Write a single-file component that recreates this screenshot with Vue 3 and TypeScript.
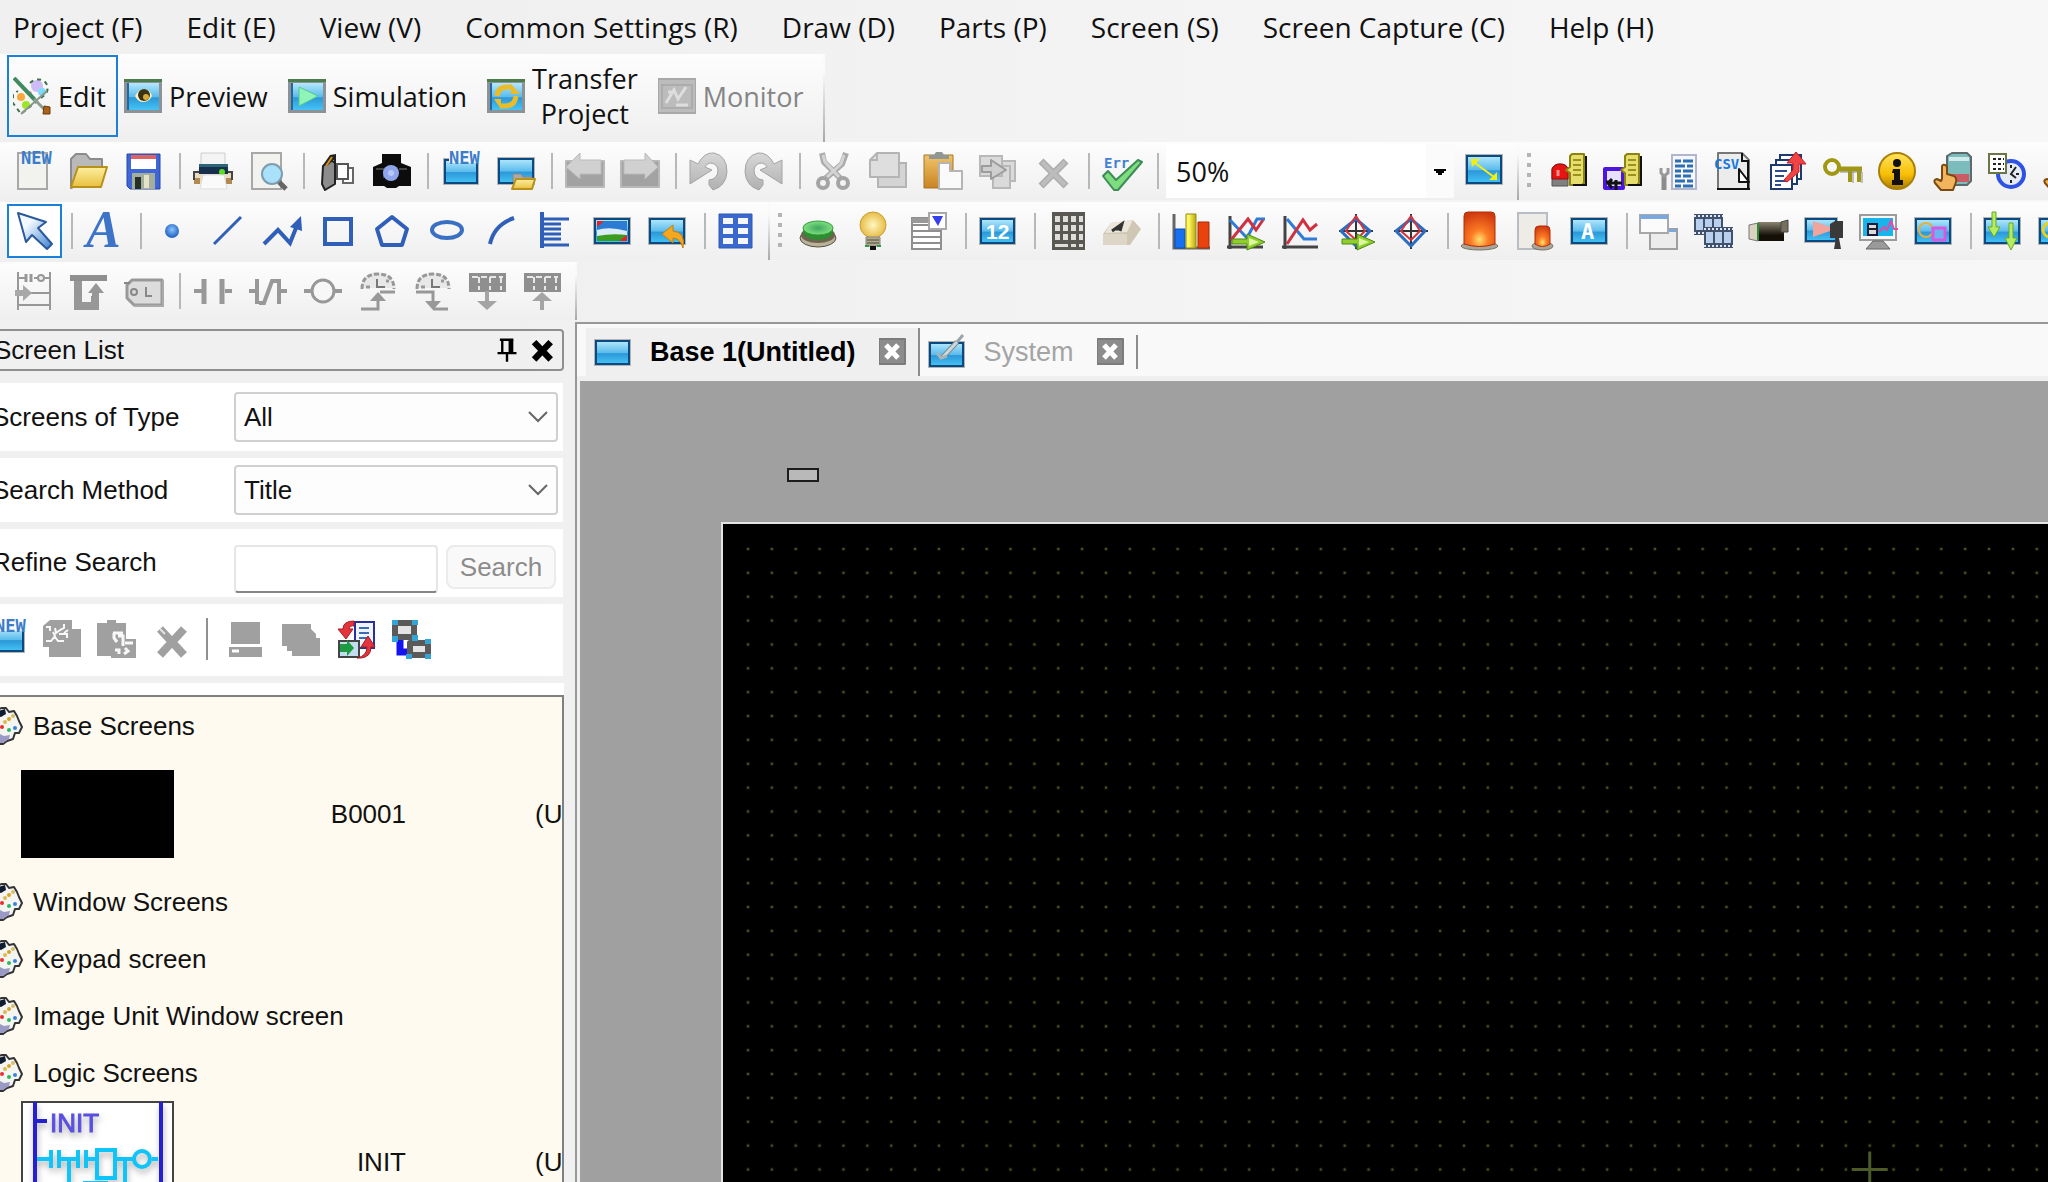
<script setup lang="ts">
import { ref } from 'vue'

interface Tool {
  icon: string
  label: string
  off?: boolean
  active?: boolean
}
type Group = Tool[]

const blue = '#2f5fb8'
const grey = '#989898'

/* Small builders for shapes that many toolbar glyphs share. */
const screen = (x: number, y: number, w: number, h: number): string =>
  `<rect x="${x}" y="${y}" width="${w}" height="${h}" fill="#b4b4b4"/>` +
  `<rect x="${x + 2}" y="${y + 2}" width="${w - 4}" height="${h - 4}" fill="url(#gScreen)" stroke="#0b4a80" stroke-width="2"/>`
const page = (x: number, y: number, w: number, h: number, fill = '#f2f2ee', stroke = '#a8a8a8'): string =>
  `<rect x="${x + 1}" y="${y + 1}" width="${w - 2}" height="${h - 2}" fill="${fill}" stroke="${stroke}" stroke-width="2"/>`
const line = (d: string, stroke: string, w = 2): string =>
  `<path d="${d}" fill="none" stroke="${stroke}" stroke-width="${w}"/>`
const shape = (d: string, fill: string, stroke = 'none', w = 1): string =>
  `<path d="${d}" fill="${fill}" stroke="${stroke}" stroke-width="${w}" stroke-linejoin="round"/>`
const word = (x: number, y: number, size: number, fill: string, text: string, family = 'DejaVu Sans Mono'): string =>
  `<text x="${x}" y="${y}" font-family="${family}, monospace" font-weight="700" font-size="${size}" fill="${fill}">${text}</text>`
const lamp = (x: number, y: number, w: number, h: number): string =>
  `<ellipse cx="${x + w / 2}" cy="${y + h - 4}" rx="${w / 2}" ry="4" fill="#a9a598" stroke="#77736a"/>` +
  `<path d="M${x + 3} ${y + h - 6}V${y + 4}Q${x + 3} ${y} ${x + 7} ${y}H${x + w - 7}Q${x + w - 3} ${y} ${x + w - 3} ${y + 4}V${y + h - 6}Q${x + w / 2} ${y + h - 1} ${x + 3} ${y + h - 6}Z" fill="url(#gLamp)" stroke="#b02c08"/>`
const recipe = shape('M21 4L23 2H35V31L33 33H21V21L17 18L21 15Z', '#e6de6c', '#8d8410', 2) +
  line('M37 4V33H24', '#111', 2) + line('M24 8H32M24 13H32M24 18H32M24 23H32', '#9b921e', 2)
const hand = shape('M8 27V15Q8 12 11 13Q13 13 13 16V22L20 24Q23 26 22 30L19 38H7L1 31Q-1 28 3 27L7 29Z', '#f2b45c', '#7a4a10', 2)
const greenArrow = shape('M5 27H20V22L38 30L20 38V32H5Z', '#8fce2c', '#4d8a12', 1) + shape('M22 26L32 30L22 34Z', '#dcf7a0')
const timer = shape('M3 16Q5 1 20 1Q35 1 36 16Z', '#e8e8e8') +
  `<path d="M4 17Q4 2 20 2Q36 2 36 17" fill="none" stroke="${grey}" stroke-width="3" stroke-dasharray="5 2"/>` +
  line('M19 7V15H27', '#777', 2) + line('M8 15H12M28 9H31', grey, 3)
const block = shape('M1 1H38V20H1Z', '#8f8f8f') +
  '<path d="M4 5H35M11 5V18M22 5V18M33 5V18" fill="none" stroke="#e8e8e8" stroke-width="2" stroke-dasharray="6 3"/>'
const gear = shape('M4 5L12 2L17 1L21 1L24 5L29 4L32 9L34 14L37 20L34 26L30 26L28 32L22 34L18 37H12L9 28L4 24L2 14Z', '#f4f4f0', '#333', 2) +
  shape('M13 26L19 29L25 28L24 32L18 36H13Z', '#9a9ac4') + shape('M13 4L20 2L21 7L16 10L13 9Z', '#101c30') +
  '<circle cx="24" cy="12" r="2" fill="#d8a52a"/><circle cx="28" cy="9" r="2" fill="#d8c070"/><circle cx="17" cy="20" r="2" fill="#e83030"/>' +
  '<circle cx="24" cy="23" r="2" fill="#2cb860"/><circle cx="30" cy="21" r="2" fill="#3884dc"/><circle cx="20" cy="15" r="2" fill="#e0b850"/>'
const curl = shape('M1 8L9 12Q15 0 25 1Q38 4 38 20Q37 34 24 38L20 33V28Q29 27 29 18Q28 11 21 11Q17 12 16 15L23 18L1 32Z', 'url(#gGrey)', '#a4a4a4', 1)
const radar = line('M19 2V37M2 19H36', '#333', 2) + shape('M19 7L33 19L19 34L4 19Z', 'none', '#2a6cc0', 3) +
  shape('M19 4L28 19L19 28L9 19Z', 'none', '#d8333a', 2)
const plot = line('M3 4V37M0 35H36', '#444', 3)
const modeScreen = '<rect x="0" y="2" width="38" height="34" fill="#8c9296"/><rect x="3" y="6" width="32" height="27" fill="url(#gScreen)"/>' +
  line('M4 6V33', '#2468a0', 2) + shape('M0 2H38V5H0Z', '#4c7c4c')

const icons: Record<string, string> = {
  fresh: page(3, 0, 31, 38) + word(7, 12, 17, '#3b7ccb', 'NEW'),
  open: shape('M2 36V7L7 2H17L21 7H33V20Z', '#b9b9b9', '#8b8b8b', 2) + shape('M9 15H38L32 35H2Z', 'url(#gFolder)', '#b8901c', 2),
  save: shape('M3 2H36V37H6L3 34Z', '#3f66d6', '#2b46a0', 1) + shape('M7 3H32V17H7Z', '#fff') + shape('M7 3H32V7H7Z', '#dd6464') +
    shape('M8 21H31V37H8Z', '#a4ae9c') + shape('M11 25H17V37H11Z', '#243026') + shape('M20 23H25V36H20Z', '#e4e2c8'),
  print: shape('M1 21L6 17H34L39 21V31H1Z', '#e9dcc0') + shape('M1 26H7V32H1ZM33 26H39V32H33Z', '#b08a50') + shape('M8 1H32V13H8Z', '#f4f4f4', '#ccc') +
    shape('M6 12H35V22H6Z', '#17304e') + shape('M6 12H35V15H6Z', '#2e6478') + '<circle cx="29" cy="20" r="3" fill="#58e020"/>' +
    line('M1 28V20H6M39 28V20H35', '#444') + shape('M10 23H31L34 37H7Z', '#fafafa', '#ddd'),
  find: page(3, 0, 31, 38) + '<circle cx="24" cy="22" r="10" fill="#a9e0fa" stroke="#7d9cae" stroke-width="2"/>' + line('M31 30L38 37', '#666', 5),
  book: shape('M6 14L12 9L14 8L18 11V32L8 38L5 32Z', '#8c8c8c', '#222', 2) + shape('M6 13L13 3L19 2L19 6L10 14Z', '#222') + line('M9 14L15 5', '#d89018', 2) +
    line('M18 6V12', '#222', 2) + page(25, 15, 12, 17, '#fff', '#666') + page(19, 11, 13, 17, '#fff', '#555'),
  camera: shape('M10 2H29V11L39 15V34H27L24 36H15L12 34H1V15L10 11Z', '#0c0c0c') + line('M4 17H12V26M35 17H27', '#444', 2) +
    '<circle cx="19" cy="21" r="8" fill="#8fa6ec"/><circle cx="19" cy="21" r="3" fill="#b8c8f8"/>',
  freshScreen: screen(2, 6, 36, 27) + '<path d="M8 0H39V11H8Z" fill="#fafafa"/>' + word(8, 12, 17, '#3b7ccb', 'NEW'),
  openScreen: screen(1, 5, 38, 28) + shape('M17 30V22H25L27 25H36V30Z', '#aaa', '#888') + shape('M20 27H39L36 37H16Z', 'url(#gFolder)', '#b8901c', 2),
  prev: shape('M1 9H39V35H1Z', '#a2a2a2', '#b8b8b8', 2) + shape('M1 15L15 1V8H36V22H15V27Z', '#d0d0d0', '#bababa'),
  next: shape('M1 9H39V35H1Z', '#a2a2a2', '#b8b8b8', 2) + shape('M38 15L25 1V8H4V22H25V27Z', '#d0d0d0', '#bababa'),
  undo: curl,
  redo: `<g transform="matrix(-1 0 0 1 39 0)">${curl}</g>`,
  cut: line('M9 1L11 10L27 26M33 1L29 12L13 26', '#ababab', 6) + line('M10 3L12 10L26 25M31 3L28 12L14 25', '#d4d4d4', 3) +
    '<circle cx="10" cy="31" r="5" fill="none" stroke="#a4a4a4" stroke-width="4"/><circle cx="30" cy="31" r="5" fill="none" stroke="#a4a4a4" stroke-width="4"/>',
  copy: page(9, 10, 30, 26, '#d4d4d4', '#b4b4b4') + shape('M2 8L9 1H31V25H2Z', '#dedede', '#b4b4b4', 2) + line('M9 2V8H3', '#b4b4b4'),
  paste: shape('M1 3H30V36H1Z', 'url(#gWood)', '#a87422') + shape('M6 3H11L13 0H19L21 3H26V7H6Z', '#8f9894') + shape('M16 11H27V19H39V37H16Z', '#fafafa', '#b4b4b4', 2),
  duplicate: page(18, 8, 20, 22, '#dadada', '#b8b8b8') + page(14, 13, 19, 24, '#dadada', '#b8b8b8') + page(1, 3, 24, 22, '#dadada', '#b8b8b8') +
    shape('M4 14H13V8L28 18L13 27V20H4Z', '#cfcfcf', '#9c9c9c', 2),
  remove: line('M8 9L33 34M33 9L8 34', '#acacac', 7) + line('M9 10L32 33M32 10L9 33', '#bdbdbd', 4),
  check: word(2, 16, 14, '#3f80d4', 'Err') + shape('M1 24L6 19L14 28L36 8L40 10L16 38H12Z', '#7fdc7f', '#3d8d58', 2),
  fit: screen(0, 2, 38, 31) + line('M10 11L29 25', '#f2ee10', 2) + shape('M6 7H15L7 15ZM32 28V20L24 28Z', '#f2ee10'),
  lampBook: shape('M3 34V17Q5 12 11 12Q18 12 19 17V34Z', '#808080', '#555') + shape('M3 27V17Q5 12 11 12Q18 12 19 18V27Z', '#e81414', '#8c0c0c') + line('M9 18V24', '#ff9090', 3) + recipe,
  boxBook: shape('M1 17H19V36H1Z', '#e8e0ff', '#4a16e0', 4) + line('M2 30H8M12 28V38M4 31H18M8 27L4 31L8 36', '#111', 3) + recipe,
  wrenchList: line('M5 22V38', '#8c8c8c', 5) + line('M2 16V21L5 24L9 21V16', '#999', 3) + page(12, 2, 26, 36, '#f4f7fb', '#b2b6cc') +
    line('M16 9H22M16 14H26M16 19H22M16 24H22M16 29H26M16 34H22M24 9H34M28 14H34M24 19H34M24 24H32M28 29H34M24 34H34', '#2e6fb4', 3),
  csv: shape('M4 1H28L35 8V37H4Z', '#ececec', '#777', 2) + line('M3 37H36M28 1V9H34V36', '#111', 2) + shape('M25 17V30H35Z', '#fff', '#111', 2) + word(0, 17, 14, '#1878e0', 'CSV'),
  stackUp: page(10, 2, 23, 26, '#fff', '#1c3a6c') + page(6, 7, 23, 26, '#fff', '#1c3a6c') + page(1, 12, 23, 26, '#fff', '#1c3a6c') +
    line('M6 19H18M6 24H15M6 29H18M6 33H12', '#2c4e90', 2) + shape('M15 28L24 18V11H18L27 0L37 12H30V20L18 30Z', '#f04444', '#c81c24'),
  key: '<circle cx="8" cy="15" r="7" fill="none" stroke="#a09812" stroke-width="4"/>' + line('M14 17H38', '#a09812', 5) + line('M26 17V30M35 17V30', '#a09812', 4) + line('M16 20H38M29 20V31M38 20V31', '#8a8a8a', 1),
  info: '<circle cx="18" cy="19" r="18" fill="url(#gInfo)" stroke="#a87f08" stroke-width="2"/><circle cx="18" cy="11" r="4" fill="#111"/>' + shape('M14 17H21V28H24V33H13V28H15V21H13Z', '#111'),
  handJar: shape('M13 4L18 1H33L37 5V29L33 33H16L13 29Z', '#7cbcbc', '#5c6a6c', 2) + shape('M17 22H35V30H18Z', '#cc5c64') + shape('M15 5H35V9H15Z', '#d2eaea') + hand,
  sheetClock: '<circle cx="22" cy="22" r="13" fill="#e6eaf4" stroke="#2d52e4" stroke-width="4"/>' + line('M22 13V16M30 22H27M22 31V28M27 15L22 22L27 26', '#222', 2) +
    page(-1, 1, 19, 21, '#fff', '#6d7448') + '<path d="M4 7H15M4 12H15M4 17H15" stroke="#222" stroke-width="2" stroke-dasharray="3 2"/>',
  hand,

  pointer: shape('M2 1L30 10L22 16L36 32L31 37L16 23L10 30Z', 'url(#gPointer)', '#2a5a9c', 2),
  text: '<text x="1" y="35" font-family="Liberation Serif, serif" font-weight="700" font-style="italic" font-size="52" fill="#3d74c8">A</text>',
  dot: '<circle cx="18" cy="19" r="7" fill="url(#gDot)"/>',
  line: line('M5 32L32 5', blue, 3),
  zigzag: line('M0 32L14 18L26 31L32 16', blue, 4) + shape('M37 4L26 15L38 19Z', blue),
  rect: '<rect x="6" y="7" width="26" height="25" fill="none" stroke="#2f5fb8" stroke-width="4"/>',
  pentagon: shape('M18 5L33 17L28 33H8L3 17Z', 'none', blue, 4),
  ellipse: '<ellipse cx="18" cy="18" rx="15" ry="8" fill="none" stroke="#3a70c4" stroke-width="4"/>',
  arc: line('M6 32Q10 13 30 6', blue, 4),
  scale: line('M3 0V36', blue, 4) + line('M3 7H30M3 12H22M3 17H22M3 22H22M3 27H22M3 33H30', blue, 3),
  picture: screen(-1, 5, 38, 28) + shape('M3 9H33V21H3Z', '#2c7cd4') + shape('M3 18Q15 14 33 19V29H3Z', '#dcecf8') + shape('M3 24Q18 21 33 23V29H3Z', '#3c9c20') + shape('M3 9H10L3 15ZM33 29V23L25 29Z', '#ec2020'),
  returnScreen: screen(-1, 5, 38, 28) + shape('M13 22L24 13V19Q37 20 34 36Q31 26 24 26V31Z', '#f4a820', '#c47c0c'),
  table: shape('M1 2H34V36H1Z', '#3b68cc', '#2f5ab0') + shape('M5 6H15V12H5ZM20 6H30V12H20ZM5 16H15V22H5ZM20 16H30V22H20ZM5 26H15V32H5ZM20 26H30V32H20Z', '#f4f6fc'),
  button: '<ellipse cx="18" cy="26" rx="18" ry="9" fill="#b9b299" stroke="#585040"/><ellipse cx="18" cy="23" rx="17" ry="8" fill="#6d6450"/><path d="M3 17V21Q7 28 18 28Q29 28 33 21V17Z" fill="#2f8c30"/><ellipse cx="18" cy="16" rx="15" ry="7" fill="url(#gGreen)" stroke="#2f9c38"/>',
  bulb: '<circle cx="18" cy="13" r="13" fill="url(#gBulb)" stroke="#c8a030"/>' + shape('M11 25H25V34H11Z', '#b0aa90', '#888') + line('M12 28H24M12 31H24', '#7f7a64') + shape('M15 34H21V38H15Z', '#111') + line('M10 34H14M22 34H26', '#2c9a44', 2),
  form: page(1, 5, 31, 33, '#fff', '#8f8f8f') + shape('M2 6H18V11H2Z', '#999') + line('M2 13H31M2 19H31M2 25H31M2 31H31', '#8f8f8f') + page(18, 0, 19, 18, '#fff', '#a8a8a8') + shape('M22 4H33L28 14Z', '#3440ec'),
  number: screen(0, 5, 37, 28) + word(7, 27, 21, '#fff', '12', 'Liberation Sans'),
  keypad: shape('M4 0H37V38H4Z', '#5a5852') + '<path d="M7 4H12V10H7ZM15 4H20V10H15ZM23 4H28V10H23ZM31 4H35V10H31ZM7 13H12V19H7ZM15 13H20V19H15ZM23 13H28V19H23ZM31 13H35V19H31ZM7 22H12V28H7ZM15 22H20V28H15ZM23 22H28V28H23ZM31 22H35V28H31ZM7 32H20V35H7ZM23 32H28V35H23ZM31 32H35V35H31Z" fill="#e0deda"/>',
  keycap: shape('M0 22L8 11L30 8L38 17L27 33H0Z', '#cfc6b4') + shape('M8 11L30 8L24 20L2 21Z', '#ece6da') + shape('M0 22H24V33H0Z', '#ddd5c6') + line('M9 19L19 12L17 19M12 17H18', '#333', 3),
  bars: line('M2 2V36H38', '#666', 3) + shape('M3 17H13V36H3Z', '#1670f0', '#0c4cb4') + shape('M14 2H24V36H14Z', 'url(#gYellow)', '#8f8c10') + shape('M26 10H37V36H26Z', '#e8430e', '#a82c06'),
  trend: plot + line('M3 8L20 26L30 7H38', '#2f7cd8', 3) + line('M4 28L21 7L29 18L36 8', '#d03040', 3) + greenArrow,
  graph: plot + line('M5 7L22 27H35', '#2f7cd8', 3) + line('M5 32L21 8L28 18L35 12', '#d03040', 3),
  radarTrend: radar + greenArrow,
  radar,
  alarm: lamp(0, 0, 37, 38),
  alarmPage: page(1, 0, 31, 38, '#eeece6', '#b8bcc4') + lamp(16, 14, 21, 24),
  label: screen(-1, 5, 38, 28) + word(10, 27, 22, '#fff', 'A'),
  windows: page(9, 16, 29, 22, '#ececec', '#a0a0a0') + shape('M11 17H36V20H11Z', '#7ca8e0') + page(-1, 2, 30, 20, '#fbfbfb', '#a8a8a8') + shape('M0 3H28V7H0Z', '#7ca8e0'),
  film: [[-1, 2], [9, 15]].map(([x, y]) => `<rect x="${x}" y="${y}" width="29" height="21" fill="#43526c"/><path d="M${x} ${y + 2}h29M${x} ${y + 19}h29" stroke="#dfe8f4" stroke-width="2" stroke-dasharray="2 2"/><path d="M${x + 2} ${y + 5}h7v11h-7zM${x + 11} ${y + 5}h7v11h-7zM${x + 20} ${y + 5}h7v11h-7z" fill="#b9cfee"/>`).join(''),
  video: shape('M8 10H34V29H8Z', 'url(#gDark)') + shape('M-1 13L8 11V29L-1 27Z', '#d9d2c0', '#777') + line('M8 11V28', '#2a8a3a', 2) + shape('M31 10L38 8V20H31Z', '#77705c', '#444'),
  videoScreen: screen(-1, 5, 34, 26) + shape('M8 9V25L25 19V15Z', '#f0a49c') + shape('M25 12L30 9H38V26H34L36 37H29L31 26H25Z', '#3a3a3a'),
  monitor: page(-1, 2, 38, 27, '#f6f6f6', '#9c9c9c') + shape('M3 6H33V24H3Z', '#18b4ec') + page(7, 11, 11, 13, '#dcdcdc', '#1b1b3c') + line('M9 17H16', '#222', 2) +
    line('M19 20L24 15L27 18L31 9L34 17H38', '#e04ca8', 2) + shape('M13 29H23L30 37H6Z', '#9a9a9a', '#666'),
  shapes: screen(-1, 5, 38, 28) + '<circle cx="11" cy="18" r="7" fill="none" stroke="#e0b040" stroke-width="2"/><rect x="18" y="16" width="12" height="12" fill="#6cb4f0" stroke="#d858e4" stroke-width="3"/>',
  download: screen(-1, 5, 38, 28) + shape('M8 0H12V15H16L10 25L4 15H8Z', '#b4ee60', '#68a828') + shape('M25 11H29V26H33L27 38L21 26H25Z', '#b4ee60', '#68a828'),
  circleScreen: screen(-1, 5, 38, 28) + '<circle cx="11" cy="18" r="7" fill="none" stroke="#e8d020" stroke-width="3"/>',

  ladder: line('M4 0V38M36 0V38M4 6H12M24 6H20M27 6H36M4 33H36M14 21H36', grey) + line('M12 2V10M17 2V10', grey, 3) + '<circle cx="27" cy="6" r="3" fill="#eee" stroke="#989898" stroke-width="2"/>' + shape('M1 18H9V13L18 21L9 29V24H1Z', '#a8a8a8'),
  rung: line('M1 6H38', '#8f8f8f', 6) + line('M9 9V34H26V24', '#979797', 8) + shape('M27 11L35 21H30V34H23V21H19Z', '#979797'),
  tag: shape('M8 8H38V33H10L3 26V13Z', '#dcdcdc', '#999', 3) + line('M10 34H39V8', '#aaa', 2) + '<circle cx="10" cy="20" r="3" fill="none" stroke="#888" stroke-width="2"/>' + line('M0 11H6M22 15V24H28', '#888', 2),
  contact: line('M1 19H9M32 19H39', grey, 4) + line('M11 7V32M29 7V32', grey, 5),
  contactNot: line('M1 19H9M32 19H39', grey, 4) + line('M9 7V32M31 7V32', grey, 4) + line('M11 31H16L24 9H29', grey, 4),
  coil: '<circle cx="20" cy="19" r="11" fill="#f7f7f7" stroke="#989898" stroke-width="3"/>' + line('M1 19H9M31 19H39', grey, 4),
  timerUp: timer + line('M3 37H20V26', grey, 3) + line('M22 20H37', grey, 3) + shape('M20 20L28 29H12Z', grey),
  timerDown: timer + line('M3 20H20V30M20 37H35', grey, 3) + shape('M20 38L28 29H12Z', grey),
  blockDown: block + line('M19 19V32', '#a4a4a4', 4) + shape('M19 38L29 29H9Z', '#a4a4a4'),
  blockUp: block + line('M19 38V25', '#a4a4a4', 4) + shape('M19 20L29 29H9Z', '#a4a4a4'),

  modeEdit: '<circle cx="24" cy="9" r="6" fill="#cdbcf6"/><circle cx="29" cy="15" r="4" fill="#7fdcf8"/><circle cx="8" cy="20" r="4" fill="#f8a838"/><circle cx="13" cy="28" r="4" fill="#9ce628"/><circle cx="17" cy="16" r="2" fill="#f4a0c8"/>' +
    '<path d="M17 6Q24 0 31 4Q37 9 33 17L8 37L0 26V17L5 14" fill="none" stroke="#3c7048" stroke-width="2" stroke-dasharray="4 4"/>' +
    line('M34 14L8 37', '#8a968c', 2) + line('M1 1L22 23', '#3f8a5e', 4) + line('M21 22L33 34', '#8c9c90', 3) + shape('M31 29L37 30V37H30Z', '#a8641c', '#6c3c0c'),
  modePreview: modeScreen + '<path d="M11 19Q15 12 20 12Q26 12 28 19Q25 25 19 25Q14 25 11 19Z" fill="#fff0c0"/><circle cx="20" cy="18" r="6" fill="#3a3214"/><circle cx="22" cy="20" r="3" fill="#d8ac38"/>',
  modeRun: modeScreen + shape('M11 10V29L30 19Z', '#8ef4b8', '#58c890'),
  modeTransfer: modeScreen + line('M10 19Q11 10 20 10H25', '#ecbc28', 5) + line('M29 19Q28 29 18 29H13', '#ecbc28', 5) + shape('M24 7V17H33ZM14 32V22H7Z', '#ecbc28'),
  modeMonitor: shape('M0 2H38V36H0Z', '#bcbcbc', '#a8a8a8', 2) + line('M4 8H34V31H4Z', '#acacac', 2) + line('M8 26L16 13L20 22L28 10M10 15H15M18 28H30', '#dedede', 3),
  base: screen(0, 6, 37, 27),
  system: screen(0, 8, 37, 27) + line('M14 25L29 9', '#7a8a90', 5) + line('M14 25L29 9', '#d0d8da', 3) + line('M9 20L13 25L19 23', '#a8b4b8', 3) + line('M29 9L35 2', '#9aa6aa', 3),
  close: shape('M0 6H26V31H0Z', '#8c8c8c', '#7c7c7c', 2) + line('M7 12L19 25M19 12L7 25', '#fff', 5),

  listCopy: shape('M1 6L8 0H30V9H39V37H7V27H1Z', '#a0a0a0') + line('M4 7H8V11M13 8L14 13L18 10L22 8V4M22 13L26 10M4 21H9L13 16L11 12M13 17L16 21H22M17 14H25V18', '#f8f8f8', 2),
  listPaste: shape('M0 3H10V0H19V3H29V19H39V38H14V36H0Z', '#a0a0a0') + line('M16 13H26M17 13V18L20 22M21 16H26V26M18 30H22V34M28 23H36M28 28L31 31L27 34', '#f8f8f8', 3),
  listRemove: line('M8 9L32 35M32 9L8 35', '#a0a0a0', 8) + line('M8 9L13 14', '#e4e4e4', 2),
  listScreen: shape('M4 2H33V24H4ZM2 27H35V37H2Z', '#a0a0a0') + line('M5 31H12', '#fff', 3),
  listStack: shape('M0 4H29V9L34 14V18H38V36H10V31H5V26H0Z', '#a0a0a0'),
  listExchange: page(17, 1, 21, 28, '#f0f4fc', '#28309c') + line('M22 8H32M22 13H32M22 18H32', '#3c6cb8', 2) + page(1, 20, 22, 18, '#c4dcf0', '#444') + shape('M3 24H10V20L17 28L10 36V32H3Z', '#1e9a40') +
    shape('M17 1Q6 1 6 9H1L9 19L16 9H12Q13 5 17 6ZM20 38Q30 36 30 27H24L31 16L38 27H34Q34 37 24 38Z', '#e4343c', '#a41c24'),
  listLink: line('M8 16V32H17', '#1414f0', 7) + shape('M3 3H22V17H3ZM18 23H36V35H18Z', '#e4e4e4', '#5a5a5a', 6) +
    shape('M0 0H6V5H0ZM20 0H26V5H20ZM0 16H6V22H0ZM20 15H26V21H20ZM33 19H39V24H33ZM33 34H39V39H33ZM14 34H20V39H14Z', '#34a4d8'),
  gear,
  pin: line('M10 6H27M13 6V23M7 23H31M19 23V34', '#000', 3) + line('M24 6V23', '#000', 6),
  shut: line('M9 9L30 31M30 9L9 31', '#000', 8)
}

const t = (icon: string, label: string, off = false, active = false): Tool => ({ icon, label, off, active })

const menus = ['Project (F)', 'Edit (E)', 'View (V)', 'Common Settings (R)', 'Draw (D)', 'Parts (P)', 'Screen (S)', 'Screen Capture (C)', 'Help (H)']

const modes: Tool[] = [
  t('modeEdit', 'Edit', false, true), t('modePreview', 'Preview'), t('modeRun', 'Simulation'),
  t('modeTransfer', 'Transfer\nProject'), t('modeMonitor', 'Monitor', true)
]

const standard: Group[] = [
  [t('fresh', 'New project'), t('open', 'Open project'), t('save', 'Save project')],
  [t('print', 'Print'), t('find', 'Print preview')],
  [t('book', 'Cross reference'), t('camera', 'Capture')],
  [t('freshScreen', 'New screen'), t('openScreen', 'Open screen')],
  [t('prev', 'Previous screen', true), t('next', 'Next screen', true)],
  [t('undo', 'Undo', true), t('redo', 'Redo', true)],
  [t('cut', 'Cut', true), t('copy', 'Copy', true), t('paste', 'Paste'), t('duplicate', 'Duplicate', true), t('remove', 'Delete', true)],
  [t('check', 'Error check')]
]
const settings: Tool[] = [
  t('lampBook', 'Alarm'), t('boxBook', 'Recipe'), t('wrenchList', 'Sampling'), t('csv', 'CSV data'), t('stackUp', 'Transfer data'),
  t('key', 'Security'), t('info', 'Operation log'), t('handJar', 'Data store'), t('sheetClock', 'Time schedule'), t('hand', 'Touch action')
]
const drawing: Group[] = [
  [t('pointer', 'Select', false, true)],
  [t('text', 'Text')],
  [t('dot', 'Dot'), t('line', 'Line'), t('zigzag', 'Polyline'), t('rect', 'Rectangle'), t('pentagon', 'Polygon'), t('ellipse', 'Ellipse'),
    t('arc', 'Arc'), t('scale', 'Scale'), t('picture', 'Image'), t('returnScreen', 'Call screen')],
  [t('table', 'Table')]
]
const parts: Group[] = [
  [t('button', 'Switch'), t('bulb', 'Lamp'), t('form', 'Selector list')],
  [t('number', 'Data display')],
  [t('keypad', 'Keypad'), t('keycap', 'Key')],
  [t('bars', 'Bar graph'), t('trend', 'Historical trend'), t('graph', 'Line graph'), t('radarTrend', 'XY trend'), t('radar', 'XY graph')],
  [t('alarm', 'Alarm part'), t('alarmPage', 'Alarm list'), t('label', 'Message display')],
  [t('windows', 'Window'), t('film', 'Movie'), t('video', 'Video'), t('videoScreen', 'Video module'), t('monitor', 'Remote display'), t('shapes', 'Picture display')],
  [t('download', 'Data transmission'), t('circleScreen', 'Special data')]
]
const logic: Group[] = [
  [t('ladder', 'Insert rung', true), t('rung', 'Insert branch', true), t('tag', 'Insert label', true)],
  [t('contact', 'Normally open', true), t('contactNot', 'Normally closed', true), t('coil', 'Coil', true), t('timerUp', 'On timer', true),
    t('timerDown', 'Off timer', true), t('blockDown', 'Count down', true), t('blockUp', 'Count up', true)]
]
const listTools: Group[] = [
  [t('freshScreen', 'New screen'), t('listCopy', 'Copy screen', true), t('listPaste', 'Paste screen', true), t('listRemove', 'Delete screen', true)],
  [t('listScreen', 'Change attributes', true), t('listStack', 'Overlap', true), t('listExchange', 'Exchange'), t('listLink', 'Screen links')]
]

const zoom = ref('50%')
const screenType = ref('All')
const method = ref('Title')
const query = ref('')

/* The edit grid: one dot for every 20 panel units, with a mark at the panel's centre. */
const grid = { pitch: 358 / 15, first: 25, centreX: 47, centreY: 26 }
const cx = grid.first + grid.centreX * grid.pitch
const cy = grid.first + grid.centreY * grid.pitch
</script>

<template>
  <div class="app">
    <svg class="defs" aria-hidden="true">
      <defs>
        <linearGradient id="gScreen" x1="0" y1="0" x2="0" y2="1"><stop offset="0" stop-color="#b4e8fc" /><stop offset=".5" stop-color="#5cbcec" /><stop offset=".55" stop-color="#2c98d8" /><stop offset="1" stop-color="#45c4f6" /></linearGradient>
        <linearGradient id="gFolder" x1="0" y1="0" x2="0" y2="1"><stop offset="0" stop-color="#fdf0a0" /><stop offset="1" stop-color="#e8c040" /></linearGradient>
        <linearGradient id="gGrey" x1="0" y1="0" x2="0" y2="1"><stop offset="0" stop-color="#d8d8d8" /><stop offset="1" stop-color="#b0b0b0" /></linearGradient>
        <linearGradient id="gWood" x1="0" y1="0" x2="0" y2="1"><stop offset="0" stop-color="#f0c468" /><stop offset="1" stop-color="#c88424" /></linearGradient>
        <linearGradient id="gInfo" x1="0" y1="0" x2="0" y2="1"><stop offset="0" stop-color="#ffe45c" /><stop offset=".6" stop-color="#f8be04" /><stop offset="1" stop-color="#a87a04" /></linearGradient>
        <linearGradient id="gPointer" x1="0" y1="0" x2="1" y2="1"><stop offset=".3" stop-color="#f2f9ff" /><stop offset="1" stop-color="#3c80d0" /></linearGradient>
        <linearGradient id="gDark" x1="0" y1="0" x2="0" y2="1"><stop offset="0" stop-color="#8a8470" /><stop offset=".7" stop-color="#141008" /></linearGradient>
        <linearGradient id="gYellow" x1="0" y1="0" x2="1" y2="0"><stop offset=".3" stop-color="#fff660" /><stop offset="1" stop-color="#b8a810" /></linearGradient>
        <radialGradient id="gDot" cx=".5" cy=".4"><stop offset="0" stop-color="#8cc4fc" /><stop offset="1" stop-color="#2c6cc8" /></radialGradient>
        <radialGradient id="gLamp" cx=".5" cy=".8" r=".8"><stop offset="0" stop-color="#ffe070" /><stop offset=".35" stop-color="#fc7c24" /><stop offset="1" stop-color="#d03a10" /></radialGradient>
        <radialGradient id="gGreen"><stop offset="0" stop-color="#3fa860" /><stop offset="1" stop-color="#80e080" /></radialGradient>
        <radialGradient id="gBulb"><stop offset="0" stop-color="#fff8c0" /><stop offset="1" stop-color="#e8bc48" /></radialGradient>
      </defs>
    </svg>

    <nav class="menu" aria-label="Main menu">
      <button v-for="m in menus" :key="m" type="button">{{ m }}</button>
    </nav>

    <div class="modes band">
      <button v-for="m in modes" :key="m.label" type="button" class="mode" :class="{ active: m.active }" :disabled="m.off">
        <svg viewBox="0 0 38 38" v-html="icons[m.icon]" /><span>{{ m.label }}</span>
      </button>
    </div>

    <div class="line">
      <div class="band bar">
        <div v-for="(g, i) in standard" :key="i" class="group">
          <button v-for="b in g" :key="b.label" type="button" class="tool" :aria-label="b.label" :disabled="b.off"><svg viewBox="0 0 38 38" v-html="icons[b.icon]" /></button>
        </div>
        <div class="group">
          <select v-model="zoom" class="zoom" aria-label="Zoom"><option>25%</option><option>50%</option><option>100%</option></select>
          <button type="button" class="tool" aria-label="Fit to window"><svg viewBox="0 0 38 38" v-html="icons.fit" /></button>
        </div>
      </div>
      <div class="band bar more">
        <i class="grip" />
        <button v-for="b in settings" :key="b.label" type="button" class="tool" :aria-label="b.label"><svg viewBox="0 0 38 38" v-html="icons[b.icon]" /></button>
      </div>
    </div>

    <div class="line">
      <div class="band bar drawing">
        <div v-for="(g, i) in drawing" :key="i" class="group">
          <button v-for="b in g" :key="b.label" type="button" class="tool" :class="{ active: b.active }" :aria-label="b.label"><svg viewBox="0 0 38 38" v-html="icons[b.icon]" /></button>
        </div>
      </div>
      <div class="band bar more">
        <i class="grip" />
        <div v-for="(g, i) in parts" :key="i" class="group">
          <button v-for="b in g" :key="b.label" type="button" class="tool" :aria-label="b.label"><svg viewBox="0 0 38 38" v-html="icons[b.icon]" /></button>
        </div>
      </div>
    </div>

    <div class="line">
      <div class="band bar">
        <div v-for="(g, i) in logic" :key="i" class="group">
          <button v-for="b in g" :key="b.label" type="button" class="tool" :aria-label="b.label" :disabled="b.off"><svg viewBox="0 0 38 38" v-html="icons[b.icon]" /></button>
        </div>
      </div>
    </div>

    <div class="work">
      <aside class="dock">
        <header>
          <h2>Screen List</h2>
          <button type="button" aria-label="Auto hide"><svg viewBox="0 0 38 38" v-html="icons.pin" /></button>
          <button type="button" aria-label="Close panel"><svg viewBox="0 0 38 38" v-html="icons.shut" /></button>
        </header>
        <div class="field">
          <label for="type">Screens of Type</label>
          <div class="pick">
            <select id="type" v-model="screenType"><option>All</option><option>Base</option></select>
            <svg viewBox="0 0 20 12"><path d="M1 1L10 10L19 1" fill="none" stroke="#666" stroke-width="2" /></svg>
          </div>
        </div>
        <div class="field short">
          <label for="method">Search Method</label>
          <div class="pick">
            <select id="method" v-model="method"><option>Title</option><option>Comment</option></select>
            <svg viewBox="0 0 20 12"><path d="M1 1L10 10L19 1" fill="none" stroke="#666" stroke-width="2" /></svg>
          </div>
        </div>
        <div class="field refine">
          <label for="query">Refine Search</label>
          <input id="query" v-model="query" type="text">
          <button type="button" class="search" disabled>Search</button>
        </div>
        <div class="field actions">
          <div v-for="(g, i) in listTools" :key="i" class="group">
            <button v-for="b in g" :key="b.label" type="button" class="tool" :aria-label="b.label" :disabled="b.off"><svg viewBox="0 0 38 38" v-html="icons[b.icon]" /></button>
          </div>
        </div>
        <div class="list">
          <ul class="tree">
            <li>
              <div class="node"><svg viewBox="0 0 38 38" v-html="icons.gear" />Base Screens</div>
              <div class="item"><div class="thumb blank" /><span class="id">B0001</span><span class="title">(Untitled)</span></div>
            </li>
            <li><div class="node"><svg viewBox="0 0 38 38" v-html="icons.gear" />Window Screens</div></li>
            <li><div class="node"><svg viewBox="0 0 38 38" v-html="icons.gear" />Keypad screen</div></li>
            <li><div class="node"><svg viewBox="0 0 38 38" v-html="icons.gear" />Image Unit Window screen</div></li>
            <li>
              <div class="node"><svg viewBox="0 0 38 38" v-html="icons.gear" />Logic Screens</div>
              <div class="item tall">
                <svg class="thumb" viewBox="0 0 153 122">
                  <rect x="1" y="1" width="151" height="120" fill="#fff" stroke="#444" stroke-width="2" />
                  <g class="glow">
                    <path d="M14 1V121M140 1V121M14 20H26" fill="none" stroke="#2420d0" stroke-width="4" />
                    <text x="29" y="31" font-family="Liberation Sans, sans-serif" font-size="26" fill="#5a50e0" stroke="#5a50e0">INIT</text>
                    <path d="M16 58H29M38 58H56M65 58H75M95 58H112M131 58H137M30 49V67M38 49V67M57 49V67M65 49V67M76 49H94V77H76ZM48 58V90H64M104 58V90H85M64 82H85V100H64Z" fill="none" stroke="#10c4f8" stroke-width="4" />
                    <circle cx="121" cy="58" r="8" fill="none" stroke="#10c4f8" stroke-width="4" />
                  </g>
                </svg>
                <span class="id">INIT</span><span class="title">(Untitled)</span>
              </div>
            </li>
          </ul>
        </div>
      </aside>

      <main class="editor">
        <div class="tabs">
          <div class="tab current">
            <svg viewBox="0 0 38 38" v-html="icons.base" /><span>Base 1(Untitled)</span>
            <button type="button" aria-label="Close Base 1"><svg viewBox="0 0 28 38" v-html="icons.close" /></button>
          </div>
          <div class="tab">
            <svg viewBox="0 0 38 38" v-html="icons.system" /><span>System</span>
            <button type="button" aria-label="Close System"><svg viewBox="0 0 28 38" v-html="icons.close" /></button>
          </div>
        </div>
        <div class="stage">
          <i class="handle" />
          <svg class="panel">
            <defs>
              <pattern id="dots" :x="grid.first - 4" :y="grid.first - 4" :width="grid.pitch" :height="grid.pitch" patternUnits="userSpaceOnUse">
                <circle cx="4" cy="4" r="2" fill="#161b0b" /><circle cx="4" cy="4" r="1" fill="#5a682c" />
              </pattern>
            </defs>
            <rect width="100%" height="100%" fill="#000" />
            <rect :x="grid.first - 4" :y="grid.first - 4" width="100%" height="100%" fill="url(#dots)" />
            <path :d="`M${cx - 18} ${cy}h36M${cx} ${cy - 18}v36`" stroke="#4c5a28" stroke-width="3" />
          </svg>
        </div>
      </main>
    </div>
  </div>
</template>

<style>
body {
  background: #f0f0f0;
  overflow: hidden;
}
</style>

<style scoped>
.app {
  display: flex;
  flex-direction: column;
  height: 100vh;
  overflow: hidden;
  background: linear-gradient(90deg, #f0f0f0 25%, #f7f7f7);
  color: #111;
  font: 27px/35px "Open Sans", sans-serif;
}
.app * {
  box-sizing: border-box;
}
.defs {
  position: absolute;
  width: 0;
  height: 0;
}
button {
  padding: 0;
  border: 0;
  background: none;
  color: inherit;
  font: inherit;
}
svg {
  display: block;
  flex: none;
}

.menu {
  display: flex;
  gap: 44px;
  height: 54px;
  flex: none;
  padding-left: 13px;
  font-size: 28px;
  white-space: nowrap;
}

.band {
  background: linear-gradient(#fdfdfd, #efefef);
  border-right: 2px solid #b0b0b0;
  border-image: linear-gradient(#fafafa 20%, #a8a8a8) 0 2 0 0;
  flex: none;
}
.modes {
  display: flex;
  align-items: center;
  align-self: flex-start;
  height: 88px;
  padding: 0 10px 4px 7px;
}
.mode {
  display: flex;
  align-items: center;
  gap: 7px;
  height: 82px;
  padding: 0 8px;
  border: 2px solid transparent;
  white-space: pre-line;
  text-align: center;
}
.mode svg {
  width: 38px;
  height: 38px;
}
.mode.active {
  padding: 0 10px 0 4px;
  border-color: #1a80d8;
  margin-right: -4px;
}
.mode:disabled {
  color: #858585;
}

.line {
  display: flex;
  flex: none;
  height: 60px;
}
.bar {
  display: flex;
  align-items: center;
  height: 58px;
  padding: 0 6px 0 5px;
}
.drawing {
  padding: 0 4px 0 7px;
}
.more {
  padding-left: 0;
  flex: 1 0 auto;
}
.group {
  display: flex;
  align-items: center;
}
.group + .group::before {
  content: "";
  width: 2px;
  height: 36px;
  margin: 0 3px 0 9px;
  background: #b8b8b8;
}
.tool {
  display: flex;
  align-items: center;
  justify-content: center;
  width: 55px;
  height: 54px;
  border: 2px solid transparent;
}
.tool svg {
  width: 38px;
  height: 38px;
  overflow: visible;
}
.tool.active {
  border-color: #1a80d8;
  background: #fff;
}
.grip {
  width: 4px;
  height: 36px;
  margin: 0 9px 0 8px;
  background: repeating-linear-gradient(#b4b4b4 0 4px, transparent 4px 10px);
}
.zoom {
  appearance: none;
  width: 288px;
  height: 54px;
  margin: 0 2px 0 4px;
  padding: 0 10px;
  border: 0;
  border-radius: 0;
  background: linear-gradient(#000, #000) 268px 25px / 12px 2px no-repeat,
    linear-gradient(#000, #000) 270px 27px / 8px 2px no-repeat,
    linear-gradient(#000, #000) 272px 29px / 4px 2px no-repeat,
    linear-gradient(90deg, #fff 260px, #fbfbfb 260px);
  color: #111;
  font: inherit;
}

.work {
  display: flex;
  flex: 1;
  min-height: 0;
}
.dock {
  display: flex;
  flex-direction: column;
  gap: 7px;
  width: 572px;
  flex: none;
  margin-left: -8px;
  padding-top: 7px;
  font: 26px/34px "Liberation Sans", sans-serif;
}
.dock header {
  display: flex;
  align-items: center;
  height: 42px;
  margin-bottom: 5px;
  border: 2px solid #909090;
  border-radius: 4px;
  flex: none;
}
h2 {
  flex: 1;
  margin: 0;
  font: inherit;
}
header button {
  margin-right: 5px;
}
header svg {
  width: 30px;
  height: 30px;
}
.field {
  display: flex;
  align-items: center;
  height: 68px;
  flex: none;
  margin-right: 1px;
  padding-right: 5px;
  background: #fff;
  white-space: nowrap;
}
.short {
  height: 64px;
}
.field label {
  width: 242px;
  flex: none;
}
.pick {
  display: flex;
  align-items: center;
  flex: 1;
  height: 50px;
}
.pick select {
  appearance: none;
  width: 100%;
  height: 50px;
  padding: 0 8px;
  border: 2px solid #d0d0d0;
  border-radius: 4px;
  background: #fdfdfd;
  color: #111;
  font: inherit;
}
.pick svg {
  width: 20px;
  height: 12px;
  margin-left: -30px;
  margin-right: 10px;
  pointer-events: none;
}
.refine {
  align-items: flex-start;
  padding-top: 16px;
}
.field input {
  width: 204px;
  height: 48px;
  border: 2px solid #e6e6e6;
  border-bottom-color: #858585;
  border-radius: 4px;
  background: #fff;
  font: inherit;
}
.search {
  width: 110px;
  height: 44px;
  margin-left: 8px;
  border: 2px solid #ebebeb;
  border-radius: 8px;
  background: #f9f9f9;
  color: #8c8c8c;
}
.actions {
  height: 72px;
  padding-bottom: 2px;
}
.actions .group:first-child {
  margin-left: -14px;
}
.actions .group + .group::before {
  height: 42px;
  margin: 0 10px 0 8px;
  background: #909090;
}
.list {
  flex: 1;
  min-height: 0;
  padding-top: 12px;
  background: #fff;
}
.tree {
  height: 100%;
  margin: 0;
  padding: 0;
  overflow: hidden;
  border: 2px solid #808080;
  border-bottom: 0;
  background: #fefaef;
  list-style: none;
  white-space: nowrap;
}
.node {
  display: flex;
  align-items: center;
  gap: 10px;
  height: 57px;
}
.node svg {
  width: 38px;
  height: 38px;
  margin-left: -9px;
}
.item {
  display: flex;
  align-items: center;
  height: 119px;
  padding-left: 27px;
}
.thumb {
  width: 153px;
  height: 88px;
  flex: none;
}
.blank {
  background: #000;
}
.tall {
  height: 122px;
}
.tall .thumb {
  height: 122px;
}
.glow {
  filter: drop-shadow(1px 4px 3px rgb(0 0 0 / 30%));
}
.id {
  width: 232px;
  flex: none;
  text-align: right;
}
.title {
  flex: none;
  margin-left: 129px;
}

.editor {
  display: flex;
  flex-direction: column;
  flex: 1;
  min-width: 0;
  margin-left: 11px;
  border: solid #989898;
  border-width: 2px 0 0 2px;
  font: 27px/34px "Liberation Sans", sans-serif;
}
.tabs {
  display: flex;
  height: 57px;
  flex: none;
  padding: 4px 0 0 9px;
  border-bottom: 5px solid #efefef;
  background: #f9f9f9;
}
.tab {
  display: flex;
  align-items: center;
  height: 34px;
  margin-top: 7px;
  padding: 0 11px 0 8px;
  border-right: 2px solid #8c8c8c;
  color: #a4a4a4;
}
.tab > svg {
  width: 38px;
  height: 38px;
}
.tab button svg {
  width: 28px;
  height: 38px;
}
.tab span {
  margin: 0 23px 0 18px;
}
.current {
  height: 48px;
  margin-top: 0;
  background: #efefef;
  color: #000;
  font-weight: 700;
}
.stage {
  display: flex;
  flex: 1;
  min-height: 0;
  margin-left: 3px;
  padding: 141px 0 0 141px;
  background: #a0a0a0;
}
.handle {
  position: absolute;
  width: 32px;
  height: 14px;
  margin: -54px 0 0 66px;
  border: 2px solid #1c1c1c;
  background: #b9b9b9;
}
.panel {
  flex: 1;
  height: 100%;
  border: solid #e4e4e4;
  border-width: 2px 0 0 2px;
}
</style>
